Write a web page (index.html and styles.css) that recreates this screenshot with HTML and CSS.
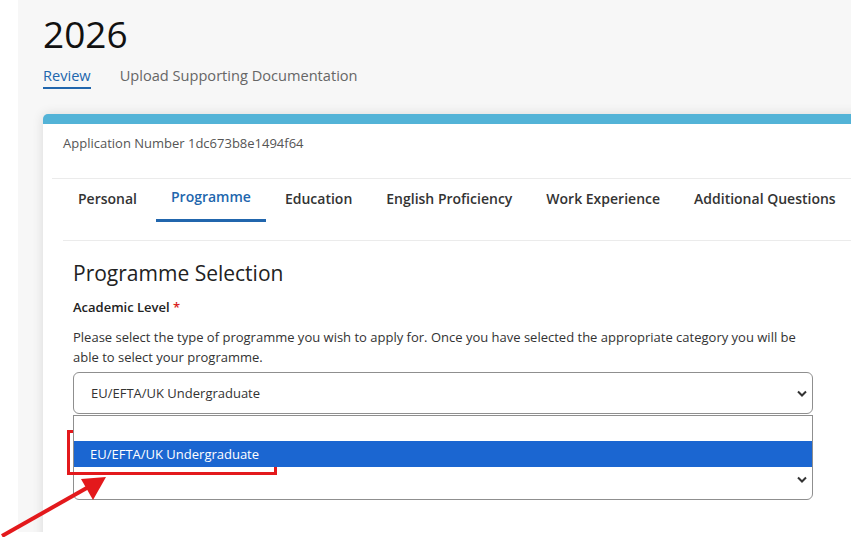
FILE: index.html
```html
<!DOCTYPE html>
<html>
<head>
    <title>Application 2026 | Programme</title>
    <link rel="stylesheet" href="styles.css">
</head>
<body>
    <div class="page">
        <h1 class="title">2026</h1>
        <div class="subnav">
            <a class="subnav-link active">Review</a>
            <a class="subnav-link">Upload Supporting Documentation</a>
        </div>

        <div class="card">
            <p class="app-number">Application Number 1dc673b8e1494f64</p>
            <div class="tabs">
                <a class="tab">Personal</a>
                <a class="tab active">Programme</a>
                <a class="tab">Education</a>
                <a class="tab">English Proficiency</a>
                <a class="tab">Work Experience</a>
                <a class="tab">Additional Questions</a>
            </div>

            <div class="form">
                <div class="form-body">
                    <h2 class="section-title">Programme Selection</h2>
                    <label class="field-label">Academic Level <span class="required">*</span></label>
                    <p class="help">Please select the type of programme you wish to apply for. Once you have selected the appropriate category you will be able to select your programme.</p>

                    <div class="select-wrap">
                        <div class="select">
                            <span>EU/EFTA/UK Undergraduate</span>
                            <svg class="chevron" width="10" height="7" viewBox="0 0 10 7"><path d="M1 1.5l4 4 4-4" fill="none" stroke="#333" stroke-width="2"/></svg>
                        </div>
                        <div class="listbox">
                            <div class="option"></div>
                            <div class="option selected">EU/EFTA/UK Undergraduate</div>
                        </div>
                        <div class="select second">
                            <span></span>
                            <svg class="chevron" width="10" height="7" viewBox="0 0 10 7"><path d="M1 1.5l4 4 4-4" fill="none" stroke="#333" stroke-width="2"/></svg>
                        </div>
                    </div>
                </div>
            </div>
        </div>
    </div>

    <div class="mark-box"></div>
    <svg class="mark-arrow" width="120" height="70" viewBox="0 0 120 70">
        <line x1="2" y1="66" x2="92" y2="15" stroke="#e3191c" stroke-width="4"/>
        <polygon points="106,7 81,9 93,30" fill="#e3191c"/>
    </svg>
</body>
</html>
```

FILE: styles.css
```css
body {
    margin: 0;
    background: #fff;
    font-family: "Open Sans", "Noto Sans", sans-serif;
    color: #333;
    overflow: hidden;
}
.page {
    margin-left: 18px;
    height: 532px;
    padding-left: 25px;
    background: #f7f7f7;
    overflow: hidden;
}
.title {
    margin: 0;
    padding-top: 9px;
    font-size: 37px;
    font-weight: 400;
    color: #111;
    line-height: 50px;
}
.subnav {
    display: flex;
    gap: 29px;
    margin-top: 6px;
}
.subnav-link {
    font-size: 14.6px;
    color: #666;
    padding-bottom: 2px;
    line-height: 20px;
}
.subnav-link.active {
    color: #2166ad;
    border-bottom: 2px solid #2166ad;
}
.card {
    margin-top: 25px;
    width: 860px;
    background: #fff;
    border-top: 10px solid #53b3d7;
    border-radius: 5px 0 0 0;
    box-shadow: 0 0 12px rgba(0, 0, 0, 0.12);
    height: 440px;
}
.app-number {
    margin: 0;
    padding: 10px 20px 0;
    height: 44px;
    font-size: 13px;
    color: #555;
    line-height: 18px;
}
.tabs {
    display: flex;
    margin-left: 9px;
    padding: 9px 0 0 9px;
    border-top: 1px solid #ebebeb;
    height: 62px;
    box-sizing: border-box;
}
.tab {
    margin: 0 2px;
    padding: 0 15px;
    height: 32px;
    font-size: 14px;
    font-weight: 600;
    color: #333;
    line-height: 22px;
    white-space: nowrap;
}
.tab.active {
    color: #2166ad;
    border-bottom: 3px solid #2166ad;
    height: 33px;
    margin-top: -2px;
}
.form {
    margin-left: 20px;
    border-top: 1px solid #ebebeb;
}
.form-body {
    padding: 18px 0 0 10px;
    width: 740px;
}
.section-title {
    margin: 0;
    font-size: 21px;
    font-weight: 400;
    color: #222;
    line-height: 28px;
}
.field-label {
    display: block;
    margin-top: 10px;
    font-size: 13px;
    font-weight: 600;
    color: #222;
    line-height: 20px;
}
.required {
    color: #d9211d;
}
.help {
    margin: 10px 0 0;
    font-size: 13px;
    line-height: 20px;
    color: #333;
}
.select-wrap {
    position: relative;
    margin-top: 5px;
}
.select {
    display: flex;
    align-items: center;
    justify-content: space-between;
    height: 40px;
    padding: 0 4px 0 17px;
    border: 1px solid #8f8f8f;
    border-radius: 6px;
    font-size: 13px;
    color: #333;
}
.select.second {
    margin-top: 44px;
}
.chevron {
    margin-right: 1px;
}
.listbox {
    position: absolute;
    top: 43px;
    left: 0;
    right: 0;
    background: #fff;
    border: 1px solid #8f8f8f;
    border-bottom: none;
    z-index: 2;
}
.option {
    height: 25px;
    padding-left: 16px;
    font-size: 13px;
    line-height: 25px;
}
.option.selected {
    height: 26px;
    line-height: 26px;
    background: #1b66d1;
    color: #fff;
}
.mark-box {
    position: absolute;
    left: 67px;
    top: 430px;
    width: 204px;
    height: 39px;
    border: 3px solid #e3191c;
}
.mark-arrow {
    position: absolute;
    left: 0;
    top: 470px;
}
```
